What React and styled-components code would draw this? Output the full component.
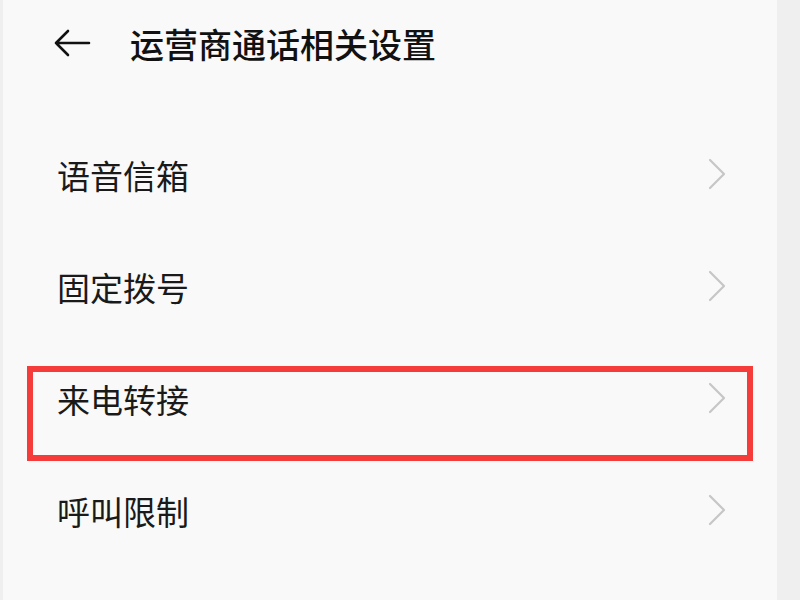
import React from 'react';
import styled, { createGlobalStyle } from 'styled-components';

const GlobalStyle = createGlobalStyle`
  html, body {
    margin: 0;
    padding: 0;
    background: #efefef;
  }
  body {
    font-family: 'Noto Sans CJK SC', 'Noto Sans', sans-serif;
  }
`;

const Screen = styled.div`
  display: flex;
  width: 800px;
  height: 600px;
  overflow: hidden;
  background: #efefef;
`;

const Main = styled.div`
  width: 774px;
  margin-left: 3px;
  background: #f9f9f9;
  display: flex;
  flex-direction: column;
`;

const Header = styled.div`
  height: 86px;
  display: flex;
  align-items: center;
  padding-left: 50px;
`;

const BackButton = styled.div`
  width: 38px;
  height: 30px;
  display: flex;
  align-items: center;
  justify-content: center;
`;

const Title = styled.div`
  margin-left: 39px;
  font-size: 34px;
  font-weight: 500;
  color: #111;
`;

const List = styled.div`
  margin-top: 33px;
  display: flex;
  flex-direction: column;
`;

const Row = styled.div`
  position: relative;
  height: 112px;
  display: flex;
  align-items: center;
  justify-content: space-between;
  padding: 0 48px 0 54px;
`;

const Label = styled.div`
  font-size: 33px;
  color: #1a1a1a;
  line-height: 1;
`;

const Chevron = styled.div`
  width: 24px;
  height: 32px;
  display: flex;
  align-items: center;
  justify-content: center;
  margin-top: -2px;
`;

const Highlight = styled.div`
  position: absolute;
  left: 24px;
  top: 23px;
  width: 714px;
  height: 83px;
  border: 6px solid #f63b3b;
`;

const BackArrow = () => (
  <svg width="38" height="30" viewBox="0 0 38 30" fill="none">
    <path d="M3 15 H36 M15 3 L3 15 L15 27" stroke="#111" strokeWidth="2.6" strokeLinecap="round" strokeLinejoin="round" />
  </svg>
);

const ChevronIcon = () => (
  <svg width="20" height="32" viewBox="0 0 20 32" fill="none">
    <path d="M3 2 L17 16 L3 30" stroke="#c6c6c6" strokeWidth="2.2" strokeLinecap="round" strokeLinejoin="round" />
  </svg>
);

const items = [
  { label: '语音信箱' },
  { label: '固定拨号' },
  { label: '来电转接', highlighted: true },
  { label: '呼叫限制' },
];

const App = () => (
  <>
    <GlobalStyle />
    <Screen>
      <Main>
        <Header>
          <BackButton>
            <BackArrow />
          </BackButton>
          <Title>运营商通话相关设置</Title>
        </Header>
        <List>
          {items.map(item => (
            <Row key={item.label}>
              <Label>{item.label}</Label>
              <Chevron>
                <ChevronIcon />
              </Chevron>
              {item.highlighted && <Highlight />}
            </Row>
          ))}
        </List>
      </Main>
    </Screen>
  </>
);

export default App;
